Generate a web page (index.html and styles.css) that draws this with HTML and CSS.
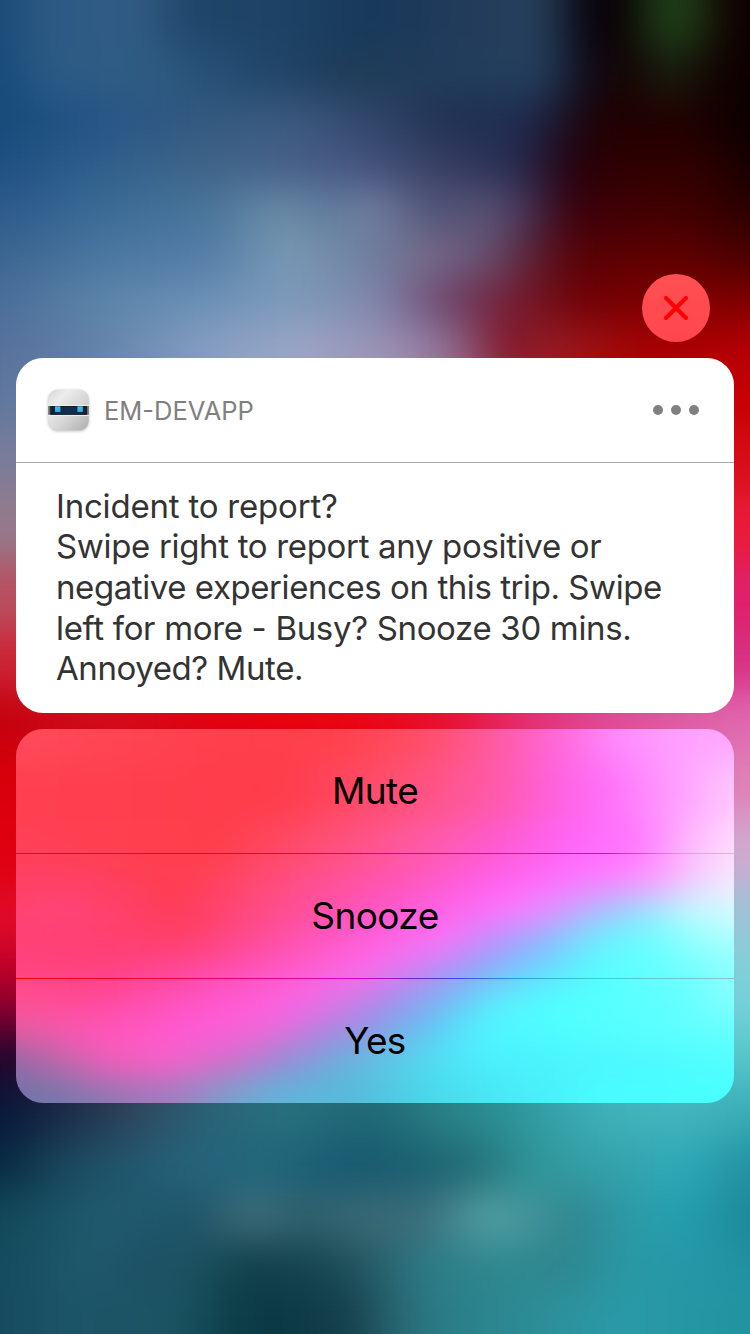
FILE: index.html
```html
<!DOCTYPE html>
<html lang="en">
<head>
<meta charset="utf-8">
<title>Notification</title>
<link rel="stylesheet" href="styles.css">
</head>
<body>
<main class="screen">
  <div class="wallpaper" aria-hidden="true">
    <i class="w1"></i><i class="w2"></i><i class="w3"></i><i class="w4"></i><i class="w5"></i>
    <i class="w6"></i><i class="w7"></i><i class="w8"></i><i class="w9"></i><i class="w10"></i>
    <i class="w11"></i><i class="w12"></i><i class="w13"></i><i class="w14"></i><i class="w15"></i>
    <i class="w16"></i><i class="w17"></i><i class="w18"></i><i class="w19"></i><i class="w20"></i>
    <i class="w21"></i><i class="w22"></i><i class="w23"></i><i class="w24"></i><i class="w25"></i>
  </div>
  <button class="close" aria-label="Close">
    <svg width="24" height="24" viewBox="0 0 24 24"><path d="M2 2 22 22M22 2 2 22" stroke="#ff0000" stroke-width="4" stroke-linecap="round"/></svg>
  </button>
  <section class="card">
    <header class="card-head">
      <svg class="app-icon" width="42" height="42" viewBox="0 0 42 42">
        <defs>
          <linearGradient id="shell" x1="0" y1="0" x2="1" y2="1"><stop offset="0" stop-color="#d4d4d4"/><stop offset=".25" stop-color="#ededed"/><stop offset=".6" stop-color="#d4d4d4"/><stop offset="1" stop-color="#adadad"/></linearGradient>
          <linearGradient id="visor" x1="0" x2="1" y1="0" y2="0"><stop offset="0" stop-color="#0d2238"/><stop offset=".5" stop-color="#14304f"/><stop offset="1" stop-color="#0d2238"/></linearGradient>
          <linearGradient id="eye" x1="0" y1="0" x2="0" y2="1"><stop offset="0" stop-color="#4cc6f0"/><stop offset="1" stop-color="#25a6dc"/></linearGradient>
        </defs>
        <rect x="1.2" y=".6" width="40.6" height="40.6" rx="9.5" fill="url(#shell)"/>
        <path d="M1.2 16.4h40.6M1.2 26.4h40.6" stroke="#f0f0f0"/>
        <rect x="1.2" y="17" width="40.6" height="8.8" fill="#6d6d6d"/>
        <rect x="3.2" y="17" width="36.8" height="8.8" fill="#16202b"/>
        <rect x="5" y="18" width="33" height="7.4" fill="url(#visor)"/>
        <rect x="8" y="17.4" width="5.4" height="5.6" fill="url(#eye)"/>
        <rect x="30.4" y="17.4" width="5.4" height="5.6" fill="url(#eye)"/>
      </svg>
      <span class="app-name">EM-DEVAPP</span>
      <span class="more"><b></b><b></b><b></b></span>
    </header>
    <div class="message">
      <p class="l1">Incident to report?</p>
      <p class="l2">Swipe right to report any positive or</p>
      <p class="l3">negative experiences on this trip. Swipe</p>
      <p class="l4">left for more - Busy? Snooze 30 mins.</p>
      <p class="l5">Annoyed? Mute.</p>
    </div>
  </section>
  <nav class="actions">
    <div class="glass" aria-hidden="true">
      <i class="g1"></i><i class="g2"></i><i class="g3"></i><i class="g4"></i><i class="g5"></i><i class="g6"></i>
      <i class="g7"></i><i class="g8"></i><i class="g9"></i><i class="g10"></i><i class="g11"></i>
    </div>
    <button class="action">Mute</button>
    <hr class="rule rule-top">
    <button class="action">Snooze</button>
    <hr class="rule rule-bottom">
    <button class="action">Yes</button>
  </nav>
</main>
</body>
</html>
```
FILE: styles.css
```css
* { box-sizing: border-box; }
body { margin: 0; font-family: Inter, "Liberation Sans", sans-serif; }
button { border: 0; margin: 0; padding: 0; font: inherit; color: inherit; background: none; }
p { margin: 0; }

.screen {
  position: relative;
  isolation: isolate;
  width: 750px;
  height: 1334px;
  padding: 274px 16px 0;
  overflow: hidden;
  display: flex;
  flex-direction: column;
}

/* Blurred wallpaper: bands overscan the screen by 100px on every side */
.wallpaper {
  position: absolute;
  z-index: -1;
  top: -100px;
  left: -100px;
  width: 950px;
  display: grid;
  grid-template-rows: 148px 50px 45px 45px 45px 45px 45px 49px 58px 60px 70px 70px 60px 60px 65px 70px 60px 45px 45px 50px 55px 52px 50px 48px 144px;
  filter: blur(19px);
}
.w1 { background: linear-gradient(90deg, #1b4a78 100px, #2c5a84 145px, #315c84 240px, #20456b 285px, #1d4265 380px, #18385a 475px, #233b5b 569px, #27415c 645px, #090512 682px, #0a0002 725px, #1e4019 760px, #1e4019 788px, #120300 825px, #0c0000 850px); }
.w2 { background: linear-gradient(90deg, #174a78 100px, #2c5b85 150px, #2f5c82 250px, #22486e 350px, #1e3b57 450px, #223d5c 570px, #243f5e 645px, #0f0f1f 680px, #150103 720px, #182010 775px, #120000 820px, #0f0000 850px); }
.w3 { background: linear-gradient(90deg, #164a78 100px, #265588 200px, #33597f 300px, #3d5a80 390px, #2f4467 480px, #202f52 550px, #1f2d52 620px, #1a0e20 670px, #1f0002 700px, #230000 775px, #0a0000 850px); }
.w4 { background: linear-gradient(90deg, #1e4f82 100px, #2f5f8a 200px, #3f6489 300px, #46618a 380px, #475683 450px, #3a4165 530px, #262a50 620px, #25000d 670px, #2e0000 720px, #300000 800px, #150000 850px); }
.w5 { background: linear-gradient(90deg, #2d5a8a 100px, #3a6b96 200px, #49759a 310px, #6b8ca6 380px, #5f7b9b 430px, #7480a0 475px, #4f5377 530px, #5a5273 595px, #402f52 630px, #3a000b 670px, #430000 775px, #2c0000 850px); }
.w6 { background: linear-gradient(90deg, #3c6490 100px, #4a769f 200px, #557da8 310px, #7a9ab4 390px, #6d7b9d 475px, #786b88 530px, #655070 590px, #5a2035 630px, #570003 680px, #600000 775px, #480000 850px); }
.w7 { background: linear-gradient(90deg, #4a6d99 100px, #5c85a8 200px, #6a8fb5 300px, #7c9aba 390px, #8088ac 475px, #6c4068 550px, #75243c 600px, #700005 680px, #800000 775px, #800000 850px); }
.w8 { background: linear-gradient(90deg, #56709b 100px, #6482ab 200px, #839dc0 300px, #9ca6c6 400px, #988cb0 500px, #8c688a 555px, #801428 605px, #951d25 650px, #a50000 750px, #b40005 850px); }
.w9 { background: linear-gradient(90deg, #60789e 115px, #7088ac 200px, #9aa4c4 350px, #a898b8 500px, #a07090 560px, #a82030 620px, #b80000 700px, #c80004 835px); }
.w10 { background: linear-gradient(90deg, #7a7c9a 130px, #d80c18 820px); }
.w11 { background: linear-gradient(90deg, #947a8c 130px, #ea1a38 820px); }
.w12 { background: linear-gradient(90deg, #b85060 130px, #e0206a 820px); }
.w13 { background: linear-gradient(90deg, #cc2535 130px, #d83084 820px); }
.w14 { background: linear-gradient(90deg, #c4000e 100px, #d00c1c 200px, #e00010 300px, #e8000c 380px, #ea0414 475px, #e81030 550px, #e82a70 620px, #e04898 700px, #e060a8 800px, #e068b0 850px); }
.w15 { background: linear-gradient(90deg, #d8000a 130px, #ea0414 475px, #e080b8 820px); }
.w16 { background: linear-gradient(90deg, #e00010 130px, #d0a8d0 820px); }
.w17 { background: linear-gradient(90deg, #e00a28 130px, #9cc4d8 820px); }
.w18 { background: linear-gradient(90deg, #c00028 130px, #80d0d8 820px); }
.w19 { background: linear-gradient(90deg, #800030 130px, #70d0d8 820px); }
.w20 { background: linear-gradient(90deg, #20062c 120px, #482c4c 230px, #2c6072 310px, #28707f 380px, #2a8085 540px, #45b8c0 700px, #55c4ca 820px); }
.w21 { background: linear-gradient(90deg, #081638 100px, #1a2c48 165px, #2f4a60 240px, #2a6075 300px, #28707f 380px, #1f6674 475px, #2a8085 540px, #2a9095 600px, #3fb0b8 700px, #42b5bd 780px, #38acb6 850px); }
.w22 { background: linear-gradient(90deg, #062a42 100px, #1c4a5f 170px, #25627a 280px, #20677a 370px, #185870 450px, #1a6070 520px, #257078 580px, #2d9598 630px, #35a0a8 700px, #2eaab8 780px, #2598a8 830px, #2090a0 850px); }
.w23 { background: linear-gradient(90deg, #124858 100px, #205a70 200px, #1f5468 300px, #426e7a 350px, #2e5f6c 400px, #3c6a76 465px, #3a6b77 520px, #55a3a8 590px, #3f8f95 640px, #2d8590 680px, #2e98a4 720px, #25a0b0 770px, #2090a0 830px, #1a8595 850px); }
.w24 { background: linear-gradient(90deg, #144a5e 100px, #20596b 180px, #1d5065 250px, #1c5260 300px, #103f4a 340px, #164650 420px, #255865 470px, #2c7a85 520px, #30888e 600px, #2e858e 670px, #2a98a4 720px, #2398a8 800px, #2090a0 850px); }
.w25 { background: linear-gradient(90deg, #164a60 100px, #1d5568 170px, #1b5362 285px, #0c3f4a 325px, #0a3843 380px, #14404c 450px, #28606c 490px, #2a7a84 530px, #2d909a 650px, #2a9aa8 720px, #2193a0 850px); }

.close {
  width: 68px;
  height: 68px;
  margin: 0 24px 16px auto;
  border-radius: 50%;
  background: linear-gradient(#ff5052, #ff464e);
  display: grid;
  place-items: center;
}

.card {
  height: 355px;
  border-radius: 27px;
  background: #fff;
}
.card-head {
  height: 105px;
  padding: 0 35px 0 30.5px;
  border-bottom: 1px solid #a9a9a9;
  display: flex;
  align-items: center;
}
.app-icon { overflow: visible; filter: drop-shadow(0 1px 1.5px rgba(0, 0, 0, .25)); }
.app-name {
  margin: 2px 0 0 15.5px;
  font-size: 25.5px;
  line-height: 32px;
  letter-spacing: 0;
  color: #808080;
}
.more { margin-left: auto; display: flex; gap: 8px; }
.more b { width: 10px; height: 10px; border-radius: 50%; background: #808080; }

.message {
  padding: 23.4px 0 0 40px;
  font-size: 33px;
  line-height: 40.5px;
  color: #333;
  white-space: nowrap;
}
.l1 { letter-spacing: -.2px; line-height: 40px; }
.l2 { letter-spacing: -.33px; line-height: 41px; }
.l3 { letter-spacing: -.43px; }
.l4 { letter-spacing: -.33px; }
.l5 { letter-spacing: -.42px; }

.actions {
  position: relative;
  isolation: isolate;
  margin-top: 16px;
  border-radius: 27px;
  overflow: hidden;
  display: flex;
  flex-direction: column;
}
.glass {
  position: absolute;
  z-index: -1;
  top: -100px;
  left: -116px;
  width: 950px;
  display: grid;
  grid-template-rows: 133px 58px 45px 30px 30px 30px 30px 30px 30px 33px 125px;
  filter: blur(16px);
}
.g1 { background: linear-gradient(90deg, #ff4a5c 116px, #ff4555 200px, #ff3e4a 350px, #ff424e 450px, #ff4f6a 530px, #ff5aa5 600px, #ff68dc 660px, #ff8cff 720px, #ffa0ff 780px, #ffa8ff 834px); }
.g2 { background: linear-gradient(90deg, #ff4050 116px, #ff3f4e 200px, #ff3c4a 380px, #ff5075 500px, #ff5aac 600px, #ff62e0 660px, #ff6cf8 700px, #ffa0ff 780px, #ffc8fb 834px); }
.g3 { background: linear-gradient(90deg, #ff4058 116px, #ff4050 200px, #ff3e4a 320px, #ff5078 430px, #ff5aa5 520px, #ff5ad0 600px, #ff65f8 670px, #ff78ff 740px, #ffb8fc 790px, #ffdcff 834px); }
.g4 { background: linear-gradient(90deg, #ff4064 116px, #ff4068 160px, #ff3e50 280px, #ff4d80 380px, #ff55b8 500px, #ff60f0 600px, #ff70ff 660px, #ff84ff 720px, #ffa0ff 760px, #f4d4ff 800px, #f8e8ff 834px); }
.g5 { background: linear-gradient(90deg, #ff4470 116px, #ff457c 160px, #ff3c58 280px, #ff4d8c 380px, #ff58d0 500px, #ff6cfa 580px, #ff7cff 620px, #d49cff 665px, #a0ccff 715px, #a0e4ff 750px, #c0fbff 790px, #d8faff 834px); }
.g6 { background: linear-gradient(90deg, #ff4078 116px, #ff4070 200px, #ff3f68 280px, #ff4c98 360px, #ff5cda 460px, #ff72fa 540px, #c090fc 590px, #90b4ff 640px, #6af0ff 700px, #66ffff 750px, #98ffff 800px, #a8ffff 834px); }
.g7 { background: linear-gradient(90deg, #ff4480 116px, #ff4080 200px, #ff48a0 300px, #ff5cd0 400px, #ff6aec 470px, #c088f8 530px, #8aa8f8 580px, #68d8ff 640px, #54ffff 700px, #78ffff 800px, #90ffff 834px); }
.g8 { background: linear-gradient(90deg, #ff4f90 116px, #ff4898 200px, #ff55c8 300px, #ff62e8 395px, #d878e8 445px, #a090ec 495px, #72bcf4 550px, #5af0ff 600px, #50ffff 660px, #60ffff 780px, #88ffff 834px); }
.g9 { background: linear-gradient(90deg, #e85ca4 116px, #ff55b8 190px, #ff5ad8 300px, #f864d8 360px, #b880dc 420px, #8c98e4 470px, #60c8f4 530px, #50f4ff 580px, #4cffff 650px, #68ffff 834px); }
.g10 { background: linear-gradient(90deg, #9068a4 116px, #c068a8 160px, #f45cb8 210px, #f860c8 270px, #d070c8 330px, #9090d8 390px, #6ab0dc 440px, #54d8ec 520px, #4ceeff 580px, #4af4fc 660px, #50ffff 834px); }
.g11 { background: linear-gradient(90deg, #7474a8 116px, #7478ac 160px, #9478b4 220px, #a07cc0 270px, #7c9cc8 320px, #60b4d8 370px, #54bcd8 460px, #48d8ec 530px, #48e8f4 600px, #48fcff 700px, #48ffff 834px); }

.action {
  height: 124px;
  font-size: 37px;
  line-height: 46px;
  letter-spacing: -.6px;
  color: #000;
}
.rule { width: 100%; height: 1px; margin: 0; border: 0; }
.rule-top { background: linear-gradient(90deg, #ff0000 250px, #f00050 400px, #f000b0 490px, #d800f0 590px, #d0a8d8 670px, #d8b8d8); }
.rule-bottom { background: linear-gradient(90deg, #ff0000, #ff0040 140px, #f00090 260px, #e000c8 345px, #7020e0 395px, #3050f0 445px, #20a0e0 500px, #3ad0d0 580px, #80c8c8); }
```
